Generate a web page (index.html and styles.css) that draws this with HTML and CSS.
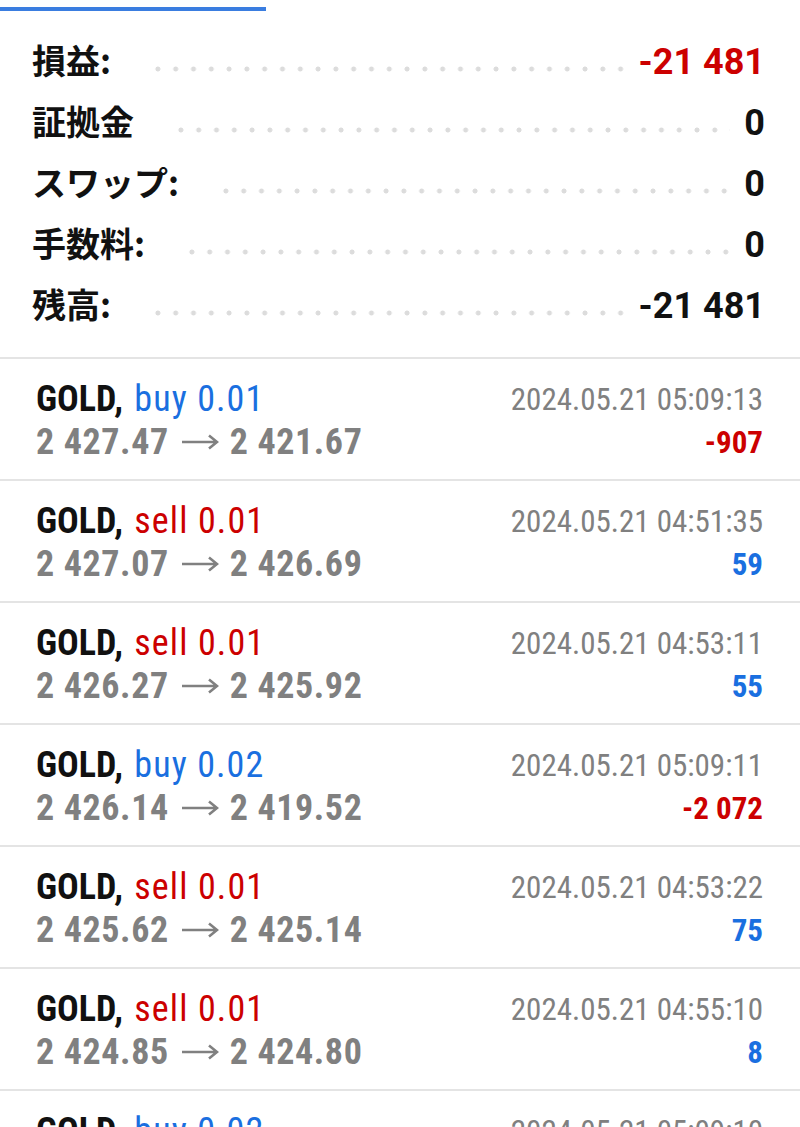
FILE: index.html
```html
<!DOCTYPE html>
<html lang="ja">
<head>
    <meta charset="UTF-8">
    <meta name="viewport" content="width=device-width, initial-scale=1.0">
    <title>履歴</title>
    <link rel="stylesheet" href="styles.css">
</head>
<body>

<div class="tab-line"></div>

<div class="summary">
    <div class="sum-row">
        <span class="sum-label">損益:</span>
        <span class="dots"></span>
        <span class="sum-value loss">-21 481</span>
    </div>
    <div class="sum-row">
        <span class="sum-label">証拠金</span>
        <span class="dots"></span>
        <span class="sum-value">0</span>
    </div>
    <div class="sum-row">
        <span class="sum-label">スワップ:</span>
        <span class="dots"></span>
        <span class="sum-value">0</span>
    </div>
    <div class="sum-row">
        <span class="sum-label">手数料:</span>
        <span class="dots"></span>
        <span class="sum-value">0</span>
    </div>
    <div class="sum-row">
        <span class="sum-label">残高:</span>
        <span class="dots"></span>
        <span class="sum-value">-21 481</span>
    </div>
</div>

<ul class="deals">
    <li class="deal">
        <div class="deal-left">
            <div class="deal-title">GOLD, <span class="buy">buy 0.01</span></div>
            <div class="deal-price">2 427.47<svg class="arrow" viewBox="0 0 38 16"><path d="M1 8H36M28 1.5L36 8L28 14.5"/></svg>2 421.67</div>
        </div>
        <div class="deal-right">
            <div class="deal-time">2024.05.21 05:09:13</div>
            <div class="deal-profit loss">-907</div>
        </div>
    </li>
    <li class="deal">
        <div class="deal-left">
            <div class="deal-title">GOLD, <span class="sell">sell 0.01</span></div>
            <div class="deal-price">2 427.07<svg class="arrow" viewBox="0 0 38 16"><path d="M1 8H36M28 1.5L36 8L28 14.5"/></svg>2 426.69</div>
        </div>
        <div class="deal-right">
            <div class="deal-time">2024.05.21 04:51:35</div>
            <div class="deal-profit gain">59</div>
        </div>
    </li>
    <li class="deal">
        <div class="deal-left">
            <div class="deal-title">GOLD, <span class="sell">sell 0.01</span></div>
            <div class="deal-price">2 426.27<svg class="arrow" viewBox="0 0 38 16"><path d="M1 8H36M28 1.5L36 8L28 14.5"/></svg>2 425.92</div>
        </div>
        <div class="deal-right">
            <div class="deal-time">2024.05.21 04:53:11</div>
            <div class="deal-profit gain">55</div>
        </div>
    </li>
    <li class="deal">
        <div class="deal-left">
            <div class="deal-title">GOLD, <span class="buy">buy 0.02</span></div>
            <div class="deal-price">2 426.14<svg class="arrow" viewBox="0 0 38 16"><path d="M1 8H36M28 1.5L36 8L28 14.5"/></svg>2 419.52</div>
        </div>
        <div class="deal-right">
            <div class="deal-time">2024.05.21 05:09:11</div>
            <div class="deal-profit loss">-2 072</div>
        </div>
    </li>
    <li class="deal">
        <div class="deal-left">
            <div class="deal-title">GOLD, <span class="sell">sell 0.01</span></div>
            <div class="deal-price">2 425.62<svg class="arrow" viewBox="0 0 38 16"><path d="M1 8H36M28 1.5L36 8L28 14.5"/></svg>2 425.14</div>
        </div>
        <div class="deal-right">
            <div class="deal-time">2024.05.21 04:53:22</div>
            <div class="deal-profit gain">75</div>
        </div>
    </li>
    <li class="deal">
        <div class="deal-left">
            <div class="deal-title">GOLD, <span class="sell">sell 0.01</span></div>
            <div class="deal-price">2 424.85<svg class="arrow" viewBox="0 0 38 16"><path d="M1 8H36M28 1.5L36 8L28 14.5"/></svg>2 424.80</div>
        </div>
        <div class="deal-right">
            <div class="deal-time">2024.05.21 04:55:10</div>
            <div class="deal-profit gain">8</div>
        </div>
    </li>
    <li class="deal">
        <div class="deal-left">
            <div class="deal-title">GOLD, <span class="buy">buy 0.02</span></div>
            <div class="deal-price">2 424.35<svg class="arrow" viewBox="0 0 38 16"><path d="M1 8H36M28 1.5L36 8L28 14.5"/></svg>2 419.52</div>
        </div>
        <div class="deal-right">
            <div class="deal-time">2024.05.21 05:09:10</div>
            <div class="deal-profit loss">-1 766</div>
        </div>
    </li>
</ul>

</body>
</html>
```

FILE: styles.css
```css
body {
    margin: 0;
    background: #fff;
    color: #111;
    font-family: Roboto, "Noto Sans CJK JP", sans-serif;
    overflow: hidden;
}
.tab-line {
    width: 266px;
    height: 4px;
    margin-top: 7px;
    background-color: #3a7de0;
}
.summary {
    padding: 29px 35px 12px 32px;
}
.sum-row {
    display: flex;
    align-items: baseline;
    height: 61px;
}
.sum-label {
    font-family: "Noto Sans CJK JP", sans-serif;
    font-weight: 700;
    font-size: 34px;
    line-height: 40px;
}
.dots {
    flex: 1;
    height: 10px;
    margin: 0 14px 0 38px;
    background-image: radial-gradient(circle, #dcdcdc 2.2px, transparent 2.8px);
    background-size: 17.8px 10px;
    background-repeat: repeat-x;
}
.sum-value {
    font-weight: 700;
    font-size: 36px;
    line-height: 40px;
}
.loss {
    color: #cc0000;
}
.gain {
    color: #1a6fe0;
}
.deals {
    list-style: none;
    margin: 0;
    padding: 0;
    border-top: 2px solid #e4e4e4;
}
.deal {
    display: flex;
    justify-content: space-between;
    height: 122px;
    box-sizing: border-box;
    padding: 19px 37px 0 36px;
    border-bottom: 2px solid #e4e4e4;
    font-family: "Roboto Condensed", Roboto, sans-serif;
    line-height: 43px;
}
.deal-title {
    font-size: 36px;
    font-weight: 700;
    color: #111;
    word-spacing: 3px;
}
.buy,
.sell {
    font-weight: 400;
    letter-spacing: 1.1px;
    word-spacing: 0;
}
.buy {
    color: #1a6fe0;
}
.sell {
    color: #cc0000;
}
.deal-price {
    font-size: 36px;
    font-weight: 700;
    color: #808080;
    letter-spacing: 0.6px;
}
.arrow {
    width: 38px;
    height: 16px;
    margin: 0 11px 0 12px;
    vertical-align: 4px;
    fill: none;
    stroke: #808080;
    stroke-width: 2.6;
}
.deal-right {
    text-align: right;
}
.deal-time {
    font-size: 31px;
    color: #808080;
}
.deal-profit {
    font-size: 31px;
    font-weight: 700;
}
```
